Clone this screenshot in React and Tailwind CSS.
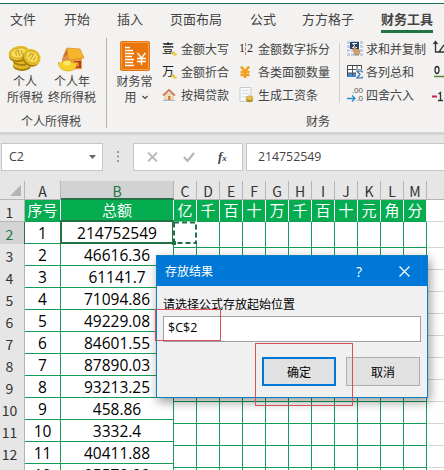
import React from 'react';

const TABS = [
    { label: '文件', cls: 'ml-[10px]' },
    { label: '开始', cls: 'ml-[28px]' },
    { label: '插入', cls: 'ml-[27px]' },
    { label: '页面布局', cls: 'ml-[27px]' },
    { label: '公式', cls: 'ml-[28px]' },
    { label: '方方格子', cls: 'ml-[26px]' },
    { label: '财务工具', cls: 'ml-[27px]', active: true },
];

const COLUMNS = ['A', 'B', 'C', 'D', 'E', 'F', 'G', 'H', 'I', 'J', 'K', 'L', 'M'];
const UNITS = ['亿', '千', '百', '十', '万', '千', '百', '十', '元', '角', '分'];
const AMOUNTS = ['214752549', '46616.36', '61141.7', '71094.86', '49229.08', '84601.55', '87890.03', '93213.25', '458.86', '3332.4', '40411.88', '95579.99'];

const gridCols = 'grid grid-cols-[25px_36px_113px_repeat(11,23px)_17px]';

const Coin = ({ cx, cy, rx = 10, ry = 8, rotate = 0 }) => (
    <g transform={`rotate(${rotate} ${cx} ${cy})`}>
        <ellipse cx={cx} cy={cy + 2} rx={rx} ry={ry} fill="#a98007" />
        <ellipse cx={cx} cy={cy} rx={rx} ry={ry} fill="#e9bf25" />
        <ellipse cx={cx} cy={cy} rx={rx - 2} ry={ry - 2} fill="#f6dc62" stroke="#c79a10" strokeWidth="0.7" />
        <path d={`M${cx - 3} ${cy + 2}v-4l3-1.500M${cx} ${cy - 3}v6M${cx + 3} ${cy - 2}v4`} stroke="#c99c14" fill="none" />
    </g>
);

const CoinsIcon = () => (
    <svg width="34" height="28" viewBox="0 0 34 28">
        <Coin cx={14} cy={20} rx={9} ry={5} />
        <Coin cx={14} cy={15} rx={9} ry={5} />
        <Coin cx={11} cy={9} rx={10.500} ry={7} rotate={-12} />
        <Coin cx={24} cy={13} rx={9} ry={7.500} rotate={35} />
    </svg>
);

const HouseIcon = () => (
    <svg width="28" height="28" viewBox="0 0 28 28">
        <path d="M8 12l4-5 12 3v15l-16 1z" fill="#e9a145" />
        <path d="M5 13l4-9 13 1 4 9-15 2-2-3z" fill="#f5b52c" stroke="#d98a1c" strokeWidth="0.700" />
        <path d="M9 4L5 14l5-3z" fill="#c9732c" />
        <path d="M4 14v10l7 1V12z" fill="#dd8e48" />
        <path d="M16 17h7v7h-7z" fill="#b93a16" />
        <path d="M18 18.500h3v4h-3z" fill="#ef8238" />
        <path d="M0 18q3 2 5 0q4-3 7 0q3 2 7 0q0 9-9 9q-9 0-10-9z" fill="#f5cf29" stroke="#d9a514" strokeWidth="0.600" />
        <ellipse cx="9" cy="19" rx="4" ry="2.500" fill="#fde668" />
    </svg>
);

const FinanceIcon = () => (
    <svg width="30" height="30" viewBox="0 0 30 30">
        <rect width="30" height="30" rx="2" fill="#e8760c" />
        <rect x="1.500" y="1.500" width="27" height="27" rx="1" fill="none" stroke="#f6b26b" strokeWidth="0.700" />
        <path d="M5 6.500h5M5 9.500h8M5 12.500h9M5 15.500h7M5 18.500h9M5 21.500h8M5 24.500h9" stroke="#fff" strokeWidth="1.400" />
        <path d="M17.500 12l4 5 4-5M21.500 17v7M17 17.500h9M17 20.500h9" stroke="#fff" strokeWidth="1.400" fill="none" />
    </svg>
);

const SmallCoins = () => (
    <svg className="absolute right-[-1px] bottom-0" width="6" height="5" viewBox="0 0 6 5">
        <ellipse cx="2" cy="2" rx="2" ry="1.500" fill="#d9c04a" />
        <ellipse cx="4" cy="3.500" rx="2" ry="1.400" fill="#ead257" />
    </svg>
);

const GlyphIcon = ({ children }) => (
    <span className="relative block w-[14px] h-[15px] text-[12px] leading-[14px] text-[#222] font-['Noto_Sans_CJK_SC',sans-serif]">
        {children}
        <SmallCoins />
    </span>
);

const HomeIcon = () => (
    <svg width="14" height="14" viewBox="0 0 14 14">
        <path d="M3 6h8v6H3z" fill="#f5dfc0" stroke="#c9a78a" strokeWidth="0.600" />
        <path d="M1 7.500L7 2l6 5.500" stroke="#cf7a5a" strokeWidth="1.800" fill="none" />
        <path d="M6 8h2.500v4H6z" fill="#d9822d" />
        <path d="M1 12.500h12" stroke="#aab8cf" />
    </svg>
);

const OneTwoIcon = () => (
    <span className="flex w-[14px] justify-between items-center text-[12px] leading-[15px] text-[#222] font-['Liberation_Serif',serif]">
        <span className="w-[5px]">1</span>
        <span className="h-[12px] border-l border-dashed border-[#d06a6a]" />
        <span className="w-[6px]">2</span>
    </span>
);

const YenIcon = () => (
    <svg width="12" height="14" viewBox="0 0 12 14">
        <path d="M2 1.500l4 5 4-5M6 6v7M1.500 7h9M1.500 10h9" stroke="#f0a01c" strokeWidth="2.600" fill="none" />
    </svg>
);

const SheetIcon = () => (
    <svg width="15" height="16" viewBox="0 0 15 16">
        <path d="M1 .5h11v14H1z" fill="#f7f8fa" stroke="#c5cad1" />
        <path d="M3 3.500h7M3 6.500h7M3 9.500h4" stroke="#d8dde4" />
        <ellipse cx="10.500" cy="13" rx="3.500" ry="2.200" fill="#b9912a" />
        <ellipse cx="10.500" cy="11" rx="3.500" ry="2.200" fill="#e3c155" stroke="#ad8728" strokeWidth="0.500" />
    </svg>
);

const SumCopyIcon = () => (
    <svg width="16" height="15" viewBox="0 0 16 15">
        <path d="M0 0h16v15H0z" fill="#c3cfe0" />
        <path d="M0 3.500h16M0 7.500h16M0 11.500h16M3.500 0v15M12.500 0v15" stroke="#fff" />
        <path d="M3 1h9v7H3z" fill="#29416c" />
        <path d="M10 2.500H5.500L8 4.500 5.500 6.500H10" stroke="#fff" fill="none" />
        <path d="M6 8l2-3 1 3 4 1-1 5H8z" fill="#d4a069" stroke="#a87340" strokeWidth="0.500" />
    </svg>
);

const SumTableIcon = () => (
    <svg width="16" height="15" viewBox="0 0 16 15">
        <path d="M.5 1.500h14v11H.5z" fill="#fff" stroke="#444" />
        <path d="M1 9h9v4H1z" fill="#3f8cd3" />
        <path d="M1 5.500h13M1 9h13M5.500 2v10M10 2v7" stroke="#555" />
        <path d="M9 5.500h7v9.500H9z" fill="#f3f2f1" />
        <path d="M15 8.500V7H10l3 3.500-3 3.500h5.200v-1.500" stroke="#2b6cad" strokeWidth="1.200" fill="none" />
    </svg>
);

const RoundIcon = () => (
    <span className="block w-[16px] text-[8px] leading-[8px] text-[#555] font-['Liberation_Sans',sans-serif]">
        <span className="block text-right">.00</span>
        <span className="flex items-center justify-between">
            <svg width="9" height="7" viewBox="0 0 9 7"><path d="M0 3.500h8M5 .5l3 3-3 3" stroke="#2a8fc9" strokeWidth="1.300" fill="none" /></svg>
            .0
        </span>
    </span>
);

const ToolRow = ({ icon, label }) => (
    <div className="flex items-center h-[23px]">
        <span className="w-[19px] shrink-0 flex items-center">{icon}</span>
        <span className="whitespace-nowrap">{label}</span>
    </div>
);

const Ribbon = () => (
    <div className="h-[132px] bg-[#f3f2f1] border-t border-[#1f6e62] text-[#444] flex flex-col">
        <div className="h-[30px] flex items-start pt-[6px] text-[13px] leading-[18px] whitespace-nowrap">
            {TABS.map((tab) => (
                <div key={tab.label} className={tab.cls}>
                    <div className={tab.active ? 'font-bold' : ''}>{tab.label}</div>
                    {tab.active && <div className="mt-[2px] h-[3px] bg-[#217346]" />}
                </div>
            ))}
        </div>
        <div className="flex text-[12px] leading-[16px] whitespace-nowrap">
            <div className="w-[106px] pt-[10px]">
                <div className="flex h-[63px]">
                    <div className="w-[50px] flex flex-col items-center">
                        <CoinsIcon />
                        <div className="mt-[1px] text-center">个人<br />所得税</div>
                    </div>
                    <div className="w-[44px] flex flex-col items-center">
                        <HouseIcon />
                        <div className="mt-[1px] text-center">个人年<br />终所得税</div>
                    </div>
                </div>
                <div className="mt-[6px] pl-[21px]">个人所得税</div>
            </div>
            <div className="w-px h-[90px] mt-[4px] bg-[#b5b3b1]" />
            <div className="w-[55px] pt-[7px] flex flex-col items-center">
                <FinanceIcon />
                <div className="mt-[2px] text-center">财务常</div>
                <div className="flex items-center gap-[5px] pl-[3px]">
                    用
                    <svg width="6" height="5" viewBox="0 0 6 5"><path d="M.5 1L3 3.500 5.500 1" stroke="#444" strokeWidth="1.200" fill="none" /></svg>
                </div>
            </div>
            <div className="w-[282px] pt-[3px]">
                <div className="flex h-[73px]">
                    <div className="w-[76px]">
                        <ToolRow icon={<GlyphIcon>壹</GlyphIcon>} label="金额大写" />
                        <ToolRow icon={<GlyphIcon>万</GlyphIcon>} label="金额折合" />
                        <ToolRow icon={<HomeIcon />} label="按揭贷款" />
                    </div>
                    <div className="w-[101px] pl-[1px]">
                        <ToolRow icon={<OneTwoIcon />} label="金额数字拆分" />
                        <ToolRow icon={<YenIcon />} label="各类面额数量" />
                        <ToolRow icon={<SheetIcon />} label="生成工资条" />
                    </div>
                    <div className="w-px h-[60px] mt-[6px] bg-[#d2d0ce]" />
                    <div className="w-[91px] pl-[7px]">
                        <ToolRow icon={<SumCopyIcon />} label="求和并复制" />
                        <ToolRow icon={<SumTableIcon />} label="各列总和" />
                        <ToolRow icon={<RoundIcon />} label="四舍六入" />
                    </div>
                    <svg className="mt-[3px] shrink-0" width="13" height="68" viewBox="0 0 13 68">
                        <path d="M4.500 2v10H13M2.500 4l2-2.500 2 2.500M8 12l5-7" stroke="#333" strokeWidth="1.300" fill="none" />
                        <path d="M3 36.500h10" stroke="#4d8b3b" strokeWidth="1.500" />
                        <ellipse cx="6" cy="30" rx="2" ry="3.500" stroke="#333" strokeWidth="1.300" fill="none" />
                        <path d="M1 56.500h5" stroke="#c8234c" strokeWidth="2" />
                        <path d="M7.500 54l2-1.500V60M7 60.500h5" stroke="#333" strokeWidth="1.300" fill="none" />
                    </svg>
                </div>
                <div className="mt-[3px] pl-[144px]">财务</div>
            </div>
        </div>
    </div>
);

const FormulaBar = () => (
    <div className="h-[49px] pt-[11px] pl-px bg-[#e6e6e6] border-t-[3px] border-[#d3d3d3] flex items-start text-[#444] font-['Open_Sans',sans-serif]">
        <div className="w-[102px] h-[28px] -mt-[3px] bg-white border border-[#c6c6c6] flex items-center justify-between pl-[7px] pr-[6px] text-[12.5px]">
            C2
            <svg width="7" height="4" viewBox="0 0 7 4"><path d="M0 0h7L3.500 4z" fill="#666" /></svg>
        </div>
        <svg className="ml-[13px] mt-[5px]" width="4" height="12" viewBox="0 0 4 12">
            <path d="M1 1h2M1 5.500h2M1 10h2" stroke="#999" strokeWidth="2" />
        </svg>
        <div className="ml-[13px] w-[110px] h-[28px] -mt-[3px] bg-white border border-[#c6c6c6] flex items-center pl-[13px]">
            <svg width="11" height="10" viewBox="0 0 11 10"><path d="M1 .5l9 9M10 .5l-9 9" stroke="#b8b8b8" strokeWidth="1.800" /></svg>
            <svg className="ml-[25px]" width="12" height="10" viewBox="0 0 12 10"><path d="M1 5l3.500 4L11 1" stroke="#b8b8b8" strokeWidth="2.200" fill="none" /></svg>
            <span className="ml-[23px] italic font-bold text-[13px] leading-[16px] font-['Liberation_Serif',serif]">f<span className="text-[9px]">x</span></span>
        </div>
        <div className="ml-[3px] flex-1 h-[28px] -mt-[3px] bg-white border border-r-0 border-[#c6c6c6] flex items-center pl-[11px] text-[12.300px]">
            214752549
        </div>
    </div>
);

const ColumnHeaders = () => (
    <div className={`${gridCols} h-[19px] bg-[#e6e6e6] text-[#333] text-[14px] leading-[19px] text-center`}>
        <div className="border-r border-b border-[#b5b5b5] flex justify-end items-end pr-[3px] pb-[3px]">
            <svg width="11" height="11" viewBox="0 0 11 11"><path d="M11 0v11H0z" fill="#b4b4b4" /></svg>
        </div>
        {COLUMNS.map((c) => (
            <div
                key={c}
                className={c === 'B'
                    ? 'bg-[#d2d2d2] text-[#217346] border-r border-[#b5b5b5] border-b-2 border-b-[#217346]'
                    : 'border-r border-b border-[#b5b5b5]'}
            >
                <div className="h-[16px] leading-[20px]">{c}</div>
            </div>
        ))}
        <div className="border-b border-[#b5b5b5]" />
    </div>
);

const RowHeader = ({ n, active }) => (
    <div className={`border-r border-b text-[14px] leading-[25px] pr-[5px] text-center overflow-hidden ${active ? 'bg-[#d4d4d4] text-[#217346] border-[#217346] border-b-[#b5b5b5]' : 'bg-[#e6e6e6] text-[#333] border-[#b5b5b5]'}`}>
        {n}
    </div>
);

const Sheet = () => (
    <div className="relative bg-white">
        <div className={`${gridCols} h-[22px] text-center text-white text-[15px] leading-[20px]`}>
            <RowHeader n={1} />
            <div className="bg-[#05ac50] border-r border-r-white border-b border-b-[#0f9d58]">序号</div>
            <div className="bg-[#05ac50] border-r border-r-white border-b border-b-[#0f9d58]">总额</div>
            {UNITS.map((u, i) => (
                <div key={i} className="bg-[#05ac50] border-r border-r-white border-b border-b-[#0f9d58]">{u}</div>
            ))}
            <div className="border-b border-[#d4d4d4]" />
        </div>
        {AMOUNTS.map((amount, i) => (
            <div key={i} className={`${gridCols} h-[22px] text-center text-black text-[15.500px] leading-[22px] font-['Open_Sans',sans-serif]`}>
                <div className="font-['Noto_Sans_CJK_SC',sans-serif] grid"><RowHeader n={i + 2} active={i === 0} /></div>
                <div className="border-r border-b border-[#159c5a] h-[22px]">{i + 1}</div>
                <div className="border-r border-b border-[#159c5a] h-[22px]">{amount}</div>
                {UNITS.map((_, j) => <div key={j} className="border-r border-b border-[#159c5a]" />)}
                <div className="border-b border-[#d4d4d4]" />
            </div>
        ))}
        {/* active cell B2 and the marching border on C2 */}
        <div className="absolute left-[60px] top-[20px] w-[114px] h-[24px] border-2 border-[#217346]" />
        <svg className="absolute left-[172px] top-[20px]" width="26" height="26" viewBox="0 0 26 26">
            <path d="M2 2.500h22v20.500H2z" stroke="#fff" strokeWidth="2" fill="none" />
            <path d="M2 2.500h22v20.500H2z" stroke="#217346" strokeWidth="2" strokeDasharray="5 3" fill="none" />
            <path d="M0 21h4v4H0z" fill="#217346" />
        </svg>
    </div>
);

const ResultDialog = () => (
    <div className="absolute left-[156px] top-[255px] w-[272px] h-[143px] bg-[#f0f0f0] border border-[#0f7fc4] shadow-[2px_4px_10px_rgba(0,0,0,0.4)] text-[12px] text-black">
        <div className="h-[30px] bg-[#0078d7] text-white flex items-center pl-[8px] pr-[17px]">
            <span className="flex-1">存放结果</span>
            <span className="mr-[37px] text-[14px] font-['Open_Sans',sans-serif]">?</span>
            <svg width="11" height="11" viewBox="0 0 11 11"><path d="M.5.5l10 10M10.500.5l-10 10" stroke="#fff" strokeWidth="1.200" /></svg>
        </div>
        <div className="pl-[6px] pr-[6px] pt-[9px]">
            <div className="leading-[18px]">请选择公式存放起始位置</div>
            <div className="mt-[3px] w-[258px] h-[26px] bg-white border border-[#a0a0a0] pl-[4px] leading-[22px] text-[12.500px] font-['Open_Sans',sans-serif]">$C$2</div>
            <div className="mt-[15px] flex justify-end gap-[10px] pr-px">
                <button className="w-[74px] h-[29px] bg-[#e1e1e1] border-2 border-[#0078d7]">确定</button>
                <button className="w-[74px] h-[29px] bg-[#e1e1e1] border border-[#adadad]">取消</button>
            </div>
        </div>
    </div>
);

const App = () => (
    <div className="relative w-[444px] h-[470px] overflow-hidden bg-white pt-[3px] font-['Noto_Sans_CJK_SC',sans-serif]">
        <Ribbon />
        <div className="-mt-[3px]"><FormulaBar /></div>
        <ColumnHeaders />
        <Sheet />
        <ResultDialog />
        <div className="absolute left-[155px] top-[309px] w-[66px] h-[32px] border border-[#d9505a]" />
        <div className="absolute left-[255px] top-[343px] w-[98px] h-[63px] border border-[#d9505a]" />
    </div>
);

export default App;
